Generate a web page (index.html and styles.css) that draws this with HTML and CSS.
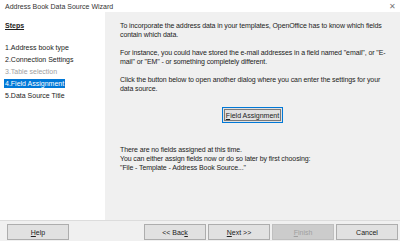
FILE: index.html
```html
<!DOCTYPE html>
<html lang="en">
<head>
    <meta charset="UTF-8">
    <title>Address Book Data Source Wizard</title>
    <link rel="stylesheet" href="styles.css">
</head>
<body>
    <div class="wizard">
        <div class="title-bar">
            <span class="title">Address Book Data Source Wizard</span>
            <span class="close">&#x2715;</span>
        </div>
        <div class="main">
            <div class="steps">
                <div class="steps-head">Steps</div>
                <ul class="step-list">
                    <li>1.Address book type</li>
                    <li>2.Connection Settings</li>
                    <li class="disabled">3.Table selection</li>
                    <li class="active"><span>4.Field Assignment</span></li>
                    <li>5.Data Source Title</li>
                </ul>
            </div>
            <div class="content">
                <p>To incorporate the address data in your templates, OpenOffice has to know which fields contain which data.</p>
                <p>For instance, you could have stored the e-mail addresses in a field named "email", or "E-mail" or "EM" - or something completely different.</p>
                <p>Click the button below to open another dialog where you can enter the settings for your data source.</p>
                <div class="assign-row">
                    <button class="btn assign"><u>F</u>ield Assignment</button>
                </div>
                <p class="status">There are no fields assigned at this time.<br>You can either assign fields now or do so later by first choosing:<br>"File - Template - Address Book Source..."</p>
            </div>
        </div>
        <div class="footer">
            <button class="btn"><u>H</u>elp</button>
            <div class="spacer"></div>
            <button class="btn">&lt;&lt; Bac<u>k</u></button>
            <button class="btn"><u>N</u>ext &gt;&gt;</button>
            <button class="btn" disabled><u>F</u>inish</button>
            <button class="btn">Cancel</button>
        </div>
    </div>
</body>
</html>
```

FILE: styles.css
```css
body {
    margin: 0;
    font-family: "Liberation Sans", Arial, sans-serif;
    font-size: 7px;
    color: #222;
    background: #f0f0f0;
}
.wizard {
    width: 400px;
    height: 241px;
    display: flex;
    flex-direction: column;
    overflow: hidden;
}
.title-bar {
    height: 12px;
    background: white;
    display: flex;
    align-items: center;
    justify-content: space-between;
    padding: 0 4px 0 5px;
}
.title {
    color: #333;
}
.close {
    color: #777;
    font-size: 8px;
}
.main {
    height: 208px;
    display: flex;
}
.steps {
    width: 105px;
    background: white;
    padding: 8px 4px 0 5px;
    box-sizing: border-box;
}
.steps-head {
    font-weight: bold;
    text-decoration: underline;
    height: 12px;
    line-height: 12px;
}
.step-list {
    list-style: none;
    margin: 10px 0 0;
    padding: 0;
}
.step-list li {
    height: 12px;
    line-height: 12px;
    color: #222;
}
.step-list li.disabled {
    color: #a0a0a0;
}
.step-list li.active span {
    background: #0078d7;
    color: white;
    display: inline-block;
    line-height: 9px;
    margin-left: -1px;
    padding: 0 1px;
}
.content {
    flex: 1;
    padding: 9px 12px 0 15px;
    line-height: 9px;
    letter-spacing: -0.1px;
}
.content p {
    margin: 0 0 9px;
}
.assign-row {
    display: flex;
    justify-content: center;
    margin: 14px 0 22px;
    padding-right: 3px;
    letter-spacing: 0;
}
.btn {
    font-family: inherit;
    font-size: 7px;
    color: #222;
    background: #e1e1e1;
    border: 1px solid #adadad;
    width: 62px;
    height: 16px;
    padding: 0;
    white-space: nowrap;
}
.btn:disabled {
    color: #a0a0a0;
    background: #cccccc;
    border-color: #bfbfbf;
}
.assign {
    width: 61px;
    height: 16px;
    border: 1px solid #0078d7;
    box-shadow: inset 0 0 0 1px #e1e1e1, inset 0 0 0 2px #7a7a7a;
}
.footer {
    flex: 1;
    border-top: 1px solid #dcdcdc;
    display: flex;
    align-items: center;
    gap: 2px;
    padding: 2px 2px 0 7px;
}
.spacer {
    flex: 1;
}
```
